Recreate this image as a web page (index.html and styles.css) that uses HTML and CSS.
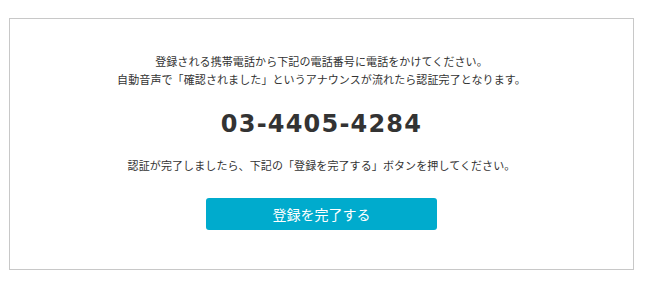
FILE: index.html
```html
<!doctype html>
<html>
<head>
<meta charset="utf-8">
<title>電話認証</title>
<link rel="stylesheet" href="styles.css">
</head>
<body>
<div class="auth-box">
  <p class="auth-lead">登録される携帯電話から下記の電話番号に電話をかけてください。<br>自動音声で「確認されました」というアナウンスが流れたら認証完了となります。</p>
  <p class="auth-tel">03-4405-4284</p>
  <p class="auth-note">認証が完了しましたら、下記の「登録を完了する」ボタンを押してください。</p>
  <button type="button" class="auth-btn">登録を完了する</button>
</div>
</body>
</html>
```

FILE: styles.css
```css
*{ margin:0; padding:0; box-sizing:border-box}
body{ background:#fff; font-family:"Noto Sans CJK JP","Noto Sans",sans-serif; color:#333}
.auth-box{ width:625px; height:252px; margin:18px 0 0 9px; border:1px solid #c8c8c8; display:flex; flex-direction:column; align-items:center; padding-top:33px}
.auth-lead{ font-size:11px; line-height:18px; text-align:center; letter-spacing:0.1px}
.auth-tel{ font-family:"DejaVu Sans",sans-serif; font-size:24px; font-weight:bold; letter-spacing:1.2px; line-height:30px; margin-top:21px}
.auth-note{ font-size:11px; line-height:18px; margin-top:17px; letter-spacing:0.1px}
.auth-btn{ width:231px; height:32px; margin-top:24px; background:#00abcd; color:#fff; border:none; border-radius:3px; font-family:inherit; font-size:14px}
```
